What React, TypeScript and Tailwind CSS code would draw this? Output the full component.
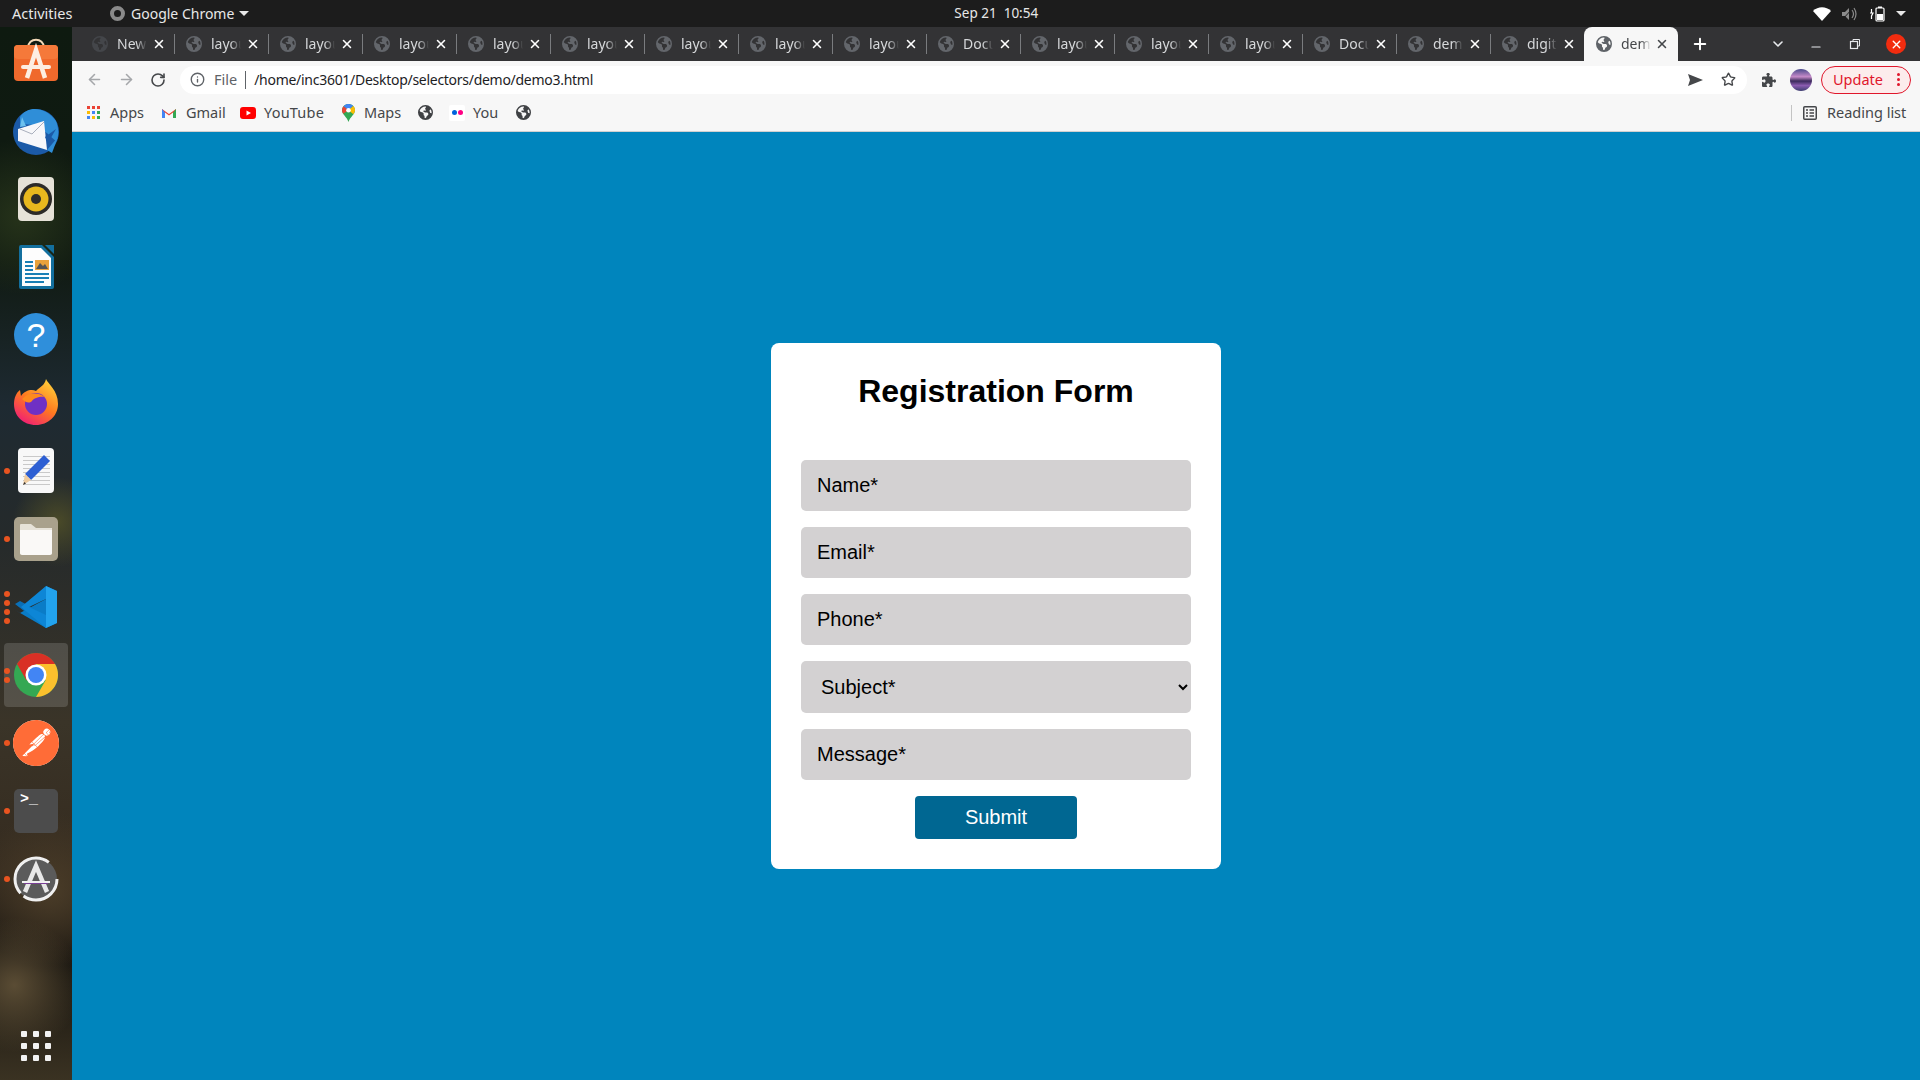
import React from 'react'
import { FaEarthAmericas, FaPuzzlePiece } from 'react-icons/fa6'
import { SiPostman } from 'react-icons/si'
import { ArrowLeft, ArrowRight, RotateCw, Info, Star, X, Plus, ChevronDown, Minus } from 'lucide-react'

const tabs = ['New', 'layout', 'layout', 'layout', 'layout', 'layout', 'layout', 'layout', 'layout', 'Document', 'layout', 'layout', 'layout', 'Document', 'demo', 'digital']

function Tab({ title, first, last }: { title: string; first?: boolean; last?: boolean }) {
  return (
    <div className="relative flex h-full w-[94px] shrink-0 items-center pb-[1px] pl-[12px]">
      <FaEarthAmericas className={`h-4 w-4 shrink-0 ${first ? 'text-[#44464a]' : 'text-[#63666b]'}`} />
      <span className="ml-[9px] w-[30px] overflow-hidden whitespace-nowrap text-[14px] text-[#d6d8da] [mask-image:linear-gradient(to_right,black_65%,transparent)]">{title}</span>
      <X className="ml-[5px] h-[14px] w-[14px] shrink-0 text-white" strokeWidth={2.6} />
      {!last && <div className="absolute right-[-1px] top-[7px] h-[20px] w-px bg-[#7a7c7f]" />}
    </div>
  )
}

function AppStore() {
  return (
    <svg className="-translate-y-[3px]" width="48" height="48" viewBox="0 0 48 48">
      <path d="M16 12 C16 1 32 1 32 12" fill="none" stroke="#f3d9b8" strokeWidth="2" />
      <rect x="2" y="9" width="44" height="36" rx="4" fill="#f0692c" />
      <rect x="2" y="9" width="44" height="14" rx="4" fill="#f5793a" />
      <path d="M15 42 L24 14 L33 42" fill="none" stroke="#fdeee2" strokeWidth="4.5" />
      <rect x="9" y="29" width="30" height="4" rx="2" fill="#fdeee2" />
    </svg>
  )
}

function Thunderbird() {
  return (
    <svg width="48" height="48" viewBox="0 0 48 48">
      <circle cx="24" cy="25" r="23" fill="#1b5aa8" />
      <path d="M8 10 C16 -2 34 0 44 14 C47 22 47 30 44 34 C36 28 26 14 8 18 Z" fill="#2f8ed8" />
      <path d="M6 22 L32 14 L35 43 L6 34 Z" fill="#f7f7fa" />
      <path d="M8 22 L20 27 L32 15" fill="none" stroke="#a9afbd" strokeWidth="1" />
      <path d="M35 43 L46 30 L40 46 Z" fill="#2f8ed8" />
      <path d="M33 30 L44 22 L36 36 Z" fill="#1b5aa8" />
      <path d="M10 10 L14 19 L8 20 Z" fill="#6cc0ee" />
    </svg>
  )
}

function Speaker() {
  return (
    <svg width="48" height="48" viewBox="0 0 48 48">
      <rect x="6" y="2" width="36" height="44" rx="4" fill="#e6e2d8" />
      <circle cx="24" cy="24" r="16" fill="#2c2a28" />
      <circle cx="24" cy="24" r="12.5" fill="#e8b81e" />
      <circle cx="24" cy="24" r="5" fill="#2f2d2a" />
    </svg>
  )
}

function Writer() {
  return (
    <svg width="48" height="48" viewBox="0 0 48 48">
      <path d="M7 4 Q7 2 9 2 H30 L42 14 V44 Q42 46 40 46 H9 Q7 46 7 44 Z" fill="#136f9e" />
      <path d="M10 5 H29 L39 15 V43 H10 Z" fill="#fdfdfd" />
      <path d="M33 2 H42 V11 Z" fill="#136f9e" />
      <rect x="13" y="18" width="8" height="2" fill="#1a7fb5" />
      <rect x="13" y="22" width="8" height="2" fill="#1a7fb5" />
      <rect x="13" y="26" width="8" height="2" fill="#1a7fb5" />
      <rect x="13" y="30" width="24" height="2" fill="#1a7fb5" />
      <rect x="13" y="34" width="24" height="2" fill="#1a7fb5" />
      <rect x="13" y="38" width="19" height="2" fill="#1a7fb5" />
      <rect x="23" y="17" width="14" height="10" fill="#e9a23b" />
      <path d="M24 26 L28 20 L31 23 L33 21 L36 26 Z" fill="#555" />
    </svg>
  )
}

function Firefox() {
  return (
    <svg className="-translate-y-[1px]" width="48" height="48" viewBox="0 0 48 48">
      <defs>
        <linearGradient id="ffBody" x1="0.8" y1="0" x2="0.2" y2="1">
          <stop offset="0" stopColor="#ffd23a" />
          <stop offset="0.5" stopColor="#ff7a1f" />
          <stop offset="1" stopColor="#f0187a" />
        </linearGradient>
      </defs>
      <path d="M34 1 C36 6 46 12 46 26 C46 38 36 47 24 47 C11 47 2 38 2 26 C2 20 4 15 8 12 L9 18 C13 12 20 11 24 13 C28 9 33 7 34 1 Z" fill="url(#ffBody)" />
      <circle cx="24" cy="26" r="11" fill="#6f30c4" />
      <path d="M10 21 C15 15 25 13 33 19 C28 18 22 20 20 23 C17 26 13 24 10 21 Z" fill="#ff8a1e" />
    </svg>
  )
}

function Editor() {
  return (
    <svg width="48" height="48" viewBox="0 0 48 48">
      <rect x="6" y="1" width="36" height="45" rx="4" fill="#f8f8f8" />
      {[9, 13, 17, 21, 25, 29, 33, 37].map(y => (
        <rect key={y} x="11" y={y} width="27" height="1" fill="#c9c9c9" />
      ))}
      <path d="M32 8 L38 14 L19 33 L13 27 Z" fill="#2d5fd3" />
      <path d="M13 27 L19 33 L11 38 Z" fill="#eecb9f" />
      <path d="M12.4 35 L11 38 L14 36.6 Z" fill="#333" />
    </svg>
  )
}

function Files() {
  return (
    <svg width="48" height="48" viewBox="0 0 48 48">
      <rect x="2" y="2" width="44" height="44" rx="5" fill="#a9a18c" />
      <path d="M8 10 Q8 9 9 9 H19 L24 13 H40 V38 Q40 39 39 39 H9 Q8 39 8 38 Z" fill="#e6e2d8" />
      <path d="M8 15 H40 V38 Q40 40 38 40 H10 Q8 40 8 38 Z" fill="#faf9f7" />
    </svg>
  )
}

function VSCode() {
  return (
    <svg width="48" height="48" viewBox="0 0 48 48">
      <path d="M34 3 L45 8 V40 L34 45 L3 21 L8 18 L34 32 Z" fill="#0a6fb7" />
      <path d="M34 45 L3 27 L8 30 L34 16 Z" fill="#0a7cc7" />
      <path d="M34 3 L45 8 V40 L34 45 Z" fill="#22a3ee" />
      <path d="M34 3 V16 L17 24 L34 32 V45 L9 24 Z" fill="#0d86d6" />
    </svg>
  )
}

function Chrome() {
  return (
    <svg width="48" height="48" viewBox="0 0 48 48">
      <circle cx="24" cy="24" r="22" fill="#34a853" />
      <path d="M43.05 13 A22 22 0 0 1 24 46 L33.5 29.5 L24 13 Z" fill="#fbc02d" />
      <path d="M5 13 A22 22 0 0 1 43.05 13 H24 L14.5 29.5 Z" fill="#d93025" />
      <circle cx="24" cy="24" r="10.5" fill="#ffffff" />
      <circle cx="24" cy="24" r="8" fill="#4285f4" />
    </svg>
  )
}

function Updater() {
  return (
    <svg width="48" height="48" viewBox="0 0 48 48">
      <circle cx="24" cy="24" r="21" fill="#5b5b5b" stroke="#f0f0f0" strokeWidth="3" strokeDasharray="46 4 62 20" />
      <path d="M13 37 L24 11 L35 37" fill="none" stroke="#e8e8e8" strokeWidth="4.5" />
      <rect x="10" y="26" width="28" height="2" fill="#f2f2f2" />
      <rect x="12" y="28" width="24" height="1" fill="#7a3f96" />
    </svg>
  )
}

const dockItems: { icon: React.ReactNode; dots: number; active?: boolean }[] = [
  { icon: <AppStore />, dots: 0 },
  { icon: <Thunderbird />, dots: 0 },
  { icon: <Speaker />, dots: 0 },
  { icon: <Writer />, dots: 0 },
  {
    icon: (
      <div className="flex h-[44px] w-[44px] items-center justify-center rounded-full bg-[#2f8fdb] font-['Liberation_Sans',sans-serif] text-[34px] leading-none text-white">?</div>
    ),
    dots: 0,
  },
  { icon: <Firefox />, dots: 0 },
  { icon: <Editor />, dots: 1 },
  { icon: <Files />, dots: 1 },
  { icon: <VSCode />, dots: 4 },
  { icon: <Chrome />, dots: 2, active: true },
  {
    icon: (
      <div className="flex h-[46px] w-[46px] items-center justify-center rounded-full bg-white">
        <SiPostman className="h-[46px] w-[46px] text-[#ff6c37]" />
      </div>
    ),
    dots: 1,
  },
  {
    icon: (
      <div className="h-[44px] w-[44px] rounded-[5px] bg-[#4c4c4c] pl-[6px] pt-[1px] font-['Liberation_Mono',monospace] text-[15px] font-bold leading-[20px] text-white">&gt;_</div>
    ),
    dots: 1,
  },
  { icon: <Updater />, dots: 1 },
]

function Dock() {
  return (
    <div className="flex w-[72px] shrink-0 flex-col bg-[radial-gradient(circle_at_20%_91%,#5a4c34_0,transparent_7%),radial-gradient(circle_at_70%_82%,#4a3c28_0,transparent_9%),radial-gradient(circle_at_80%_47%,#4a4a28_0,transparent_8%),radial-gradient(circle_at_30%_18%,#26331a_0,transparent_9%),linear-gradient(180deg,#0e1a10_0%,#101a12_22%,#1e2a32_36%,#252a2b_48%,#3a3428_66%,#352b1f_80%,#17140f_89%,#3a3222_100%)] pt-[2px]">
      {dockItems.map((item, i) => (
        <div key={i} className="relative flex h-[68px] items-center justify-center">
          {item.active && <div className="absolute left-[4px] top-[2px] h-[64px] w-[64px] rounded-[4px] bg-white/15" />}
          <div className="relative">{item.icon}</div>
          {item.dots > 0 && (
            <div className="absolute left-[4px] top-0 flex h-full flex-col justify-center gap-[3px]">
              {Array.from({ length: item.dots }).map((_, d) => (
                <div key={d} className="h-[6px] w-[6px] rounded-full bg-[#e95420]" />
              ))}
            </div>
          )}
        </div>
      ))}
      <div className="mt-auto mb-[19px] grid w-fit grid-cols-3 gap-[6px] self-center">
        {Array.from({ length: 9 }).map((_, i) => (
          <div key={i} className="h-[6px] w-[6px] rounded-[1px] bg-[#f2f2f2]" />
        ))}
      </div>
    </div>
  )
}

function TopBar() {
  return (
    <div className="flex h-[27px] shrink-0 items-center bg-[#1c1c1c] font-['Noto_Sans',sans-serif] text-[14px] text-[#e8e8e8]">
      <span className="ml-[12px] w-[98px] text-[14.5px]">Activities</span>
      <div className="h-[15px] w-[15px] rounded-full border-[4px] border-[#8a8a8a]" />
      <span className="ml-[6px]">Google Chrome</span>
      <div className="ml-[5px] h-0 w-0 border-x-[5px] border-t-[5px] border-x-transparent border-t-[#e8e8e8]" />
      <span className="ml-[705px] w-[90px] whitespace-pre text-[13.5px]">Sep 21  10:54</span>
      <div className="ml-auto flex items-center">
        <svg width="18" height="14" viewBox="0 0 18 14"><path d="M0 4 C5 -1 13 -1 18 4 L9 14 Z" fill="#ffffff" /></svg>
        <svg className="ml-[10px]" width="16" height="14" viewBox="0 0 16 14">
          <path d="M1 5 H4 L8 1 V13 L4 9 H1 Z" fill="#8b8b8b" />
          <path d="M11 3 Q14 7 11 11 M13 1 Q17 7 13 13" fill="none" stroke="#8b8b8b" strokeWidth="1.2" />
          <path d="M1 13 L12 1" stroke="#1c1c1c" strokeWidth="1" />
        </svg>
        <svg className="ml-[12px]" width="16" height="16" viewBox="0 0 16 16">
          <path d="M2.5 3 V7 M1 7 H4 L2.5 10 V13" fill="none" stroke="#fff" strokeWidth="1.2" />
          <rect x="7" y="2" width="8" height="13" rx="1" fill="none" stroke="#fff" strokeWidth="1.2" />
          <rect x="9" y="0.5" width="4" height="1.5" fill="#fff" />
          <rect x="8" y="8" width="6" height="6" fill="#fff" />
        </svg>
        <div className="ml-[11px] mr-[14px] h-0 w-0 border-x-[5px] border-t-[5px] border-x-transparent border-t-[#e8e8e8]" />
      </div>
    </div>
  )
}

function TabStrip() {
  return (
    <div className="flex h-[34px] shrink-0 items-end bg-[#333335] pl-[8px] font-['Noto_Sans',sans-serif]">
      {tabs.map((t, i) => (
        <Tab key={i} title={t} first={i === 0} last={i === tabs.length - 1} />
      ))}
      <div className="relative flex h-full w-[94px] shrink-0 items-center rounded-t-[8px] bg-[#f7f7f7] pb-[1px] pl-[12px]">
        <FaEarthAmericas className="h-4 w-4 shrink-0 text-[#5f6368]" />
        <span className="ml-[9px] w-[30px] overflow-hidden whitespace-nowrap text-[14px] text-[#45474a] [mask-image:linear-gradient(to_right,black_65%,transparent)]">demo</span>
        <X className="ml-[4px] h-[14px] w-[14px] shrink-0 text-[#45474a]" strokeWidth={2.6} />
      </div>
      <div className="flex h-full items-center">
        <Plus className="ml-[13px] h-[18px] w-[18px] text-white" strokeWidth={2.6} />
        <ChevronDown className="ml-[61px] h-[16px] w-[16px] text-[#e8eaed]" strokeWidth={2.4} />
        <Minus className="ml-[23px] h-[14px] w-[14px] translate-y-[3px] text-[#e8eaed]" />
        <svg className="ml-[26px]" width="12" height="12" viewBox="0 0 12 12">
          <rect x="1.5" y="3.5" width="7" height="7" fill="none" stroke="#e8eaed" strokeWidth="1.2" />
          <path d="M4 3 V1.5 H10.5 V8 H9" fill="none" stroke="#e8eaed" strokeWidth="1" />
        </svg>
        <div className="ml-[25px] flex h-[20px] w-[20px] items-center justify-center rounded-full bg-[#f22c0f]">
          <X className="h-[13px] w-[13px] text-white" strokeWidth={2.6} />
        </div>
      </div>
    </div>
  )
}

function Toolbar() {
  return (
    <div className="flex h-[38px] shrink-0 items-center bg-[#f7f7f7] pb-[3px] pt-[2px] font-['Noto_Sans',sans-serif]">
      <ArrowLeft className="ml-[14px] h-[17px] w-[17px] text-[#a5a7aa]" strokeWidth={2.2} />
      <ArrowRight className="ml-[15px] h-[17px] w-[17px] text-[#a5a7aa]" strokeWidth={2.2} />
      <RotateCw className="ml-[15px] h-[16px] w-[16px] text-[#45474a]" strokeWidth={2.4} />
      <div className="ml-[14px] flex h-[28px] w-[1567px] items-center rounded-full bg-white">
        <Info className="ml-[10px] h-[15px] w-[15px] text-[#5f6368]" strokeWidth={2.2} />
        <span className="ml-[9px] text-[14.5px] leading-none text-[#5f6368]">File</span>
        <div className="ml-[8px] h-[18px] w-px bg-[#5f6368]" />
        <span className="ml-[8px] text-[14px] leading-none tracking-[-0.28px] text-[#1d1d1f]">/home/inc3601/Desktop/selectors/demo/demo3.html</span>
        <svg className="ml-auto" width="15" height="14" viewBox="0 0 15 14"><path d="M0 1 L15 7 L0 13 L2 7 Z" fill="#45474a" /></svg>
        <Star className="ml-[18px] mr-[11px] h-[15px] w-[15px] text-[#45474a]" strokeWidth={2.2} />
      </div>
      <FaPuzzlePiece className="ml-[15px] h-[14px] w-[14px] text-[#45474a]" />
      <div className="ml-[14px] h-[22px] w-[22px] rounded-full bg-[linear-gradient(180deg,#4a4a8c_0%,#c58ac8_35%,#3b2b5c_55%,#8b5cb0_75%,#3d3d70_100%)]" />
      <div className="ml-[9px] flex h-[28px] w-[90px] items-center rounded-full border border-[#e0162b] bg-[#fcecec] pl-[11px] text-[14.5px] leading-none text-[#e0162b]">
        Update
        <div className="ml-auto mr-[10px] flex flex-col gap-[2px]">
          <div className="h-[3px] w-[3px] rounded-full bg-[#e0162b]" />
          <div className="h-[3px] w-[3px] rounded-full bg-[#e0162b]" />
          <div className="h-[3px] w-[3px] rounded-full bg-[#e0162b]" />
        </div>
      </div>
    </div>
  )
}

function Bookmarks() {
  return (
    <div className="flex h-[33px] shrink-0 items-center border-b border-[#d0d0d0] bg-[#f7f7f7] pb-[5px] font-['Noto_Sans',sans-serif] text-[14.5px] text-[#45474a]">
      <div className="ml-[15px] grid grid-cols-3 gap-[2px]">
        {['#ea4335', '#ea4335', '#ea4335', '#fbbc05', '#4285f4', '#34a853', '#4285f4', '#fbbc05', '#34a853'].map((c, i) => (
          <svg key={i} width="3" height="3" viewBox="0 0 3 3" className="block"><rect width="3" height="3" fill={c} /></svg>
        ))}
      </div>
      <span className="ml-[10px] w-[34px]">Apps</span>
      <svg className="ml-[18px]" width="14" height="12" viewBox="0 0 14 12">
        <path d="M0 2 L7 7 L14 2 V11 H11 V5.5 L7 8.5 L3 5.5 V11 H0 Z" fill="#ea4335" />
        <path d="M0 2 V11 H3 V5.5 Z" fill="#4285f4" />
        <path d="M14 2 V11 H11 V5.5 Z" fill="#34a853" />
      </svg>
      <span className="ml-[10px] w-[38px]">Gmail</span>
      <svg className="ml-[16px]" width="16" height="12" viewBox="0 0 16 12">
        <rect width="16" height="12" rx="3" fill="#f00" />
        <path d="M6.5 3.5 L11 6 L6.5 8.5 Z" fill="#fff" />
      </svg>
      <span className="ml-[8px] w-[60px] tracking-[0.2px]">YouTube</span>
      <svg className="ml-[18px]" width="13" height="18" viewBox="0 0 13 18">
        <path d="M6.5 0 C10 0 13 2.7 13 6.3 C13 10.5 8 13 6.5 18 C5 13 0 10.5 0 6.3 C0 2.7 3 0 6.5 0 Z" fill="#34a853" />
        <path d="M1.5 2.2 C3 .6 5 0 6.5 0 C8.5 0 10 .8 11.2 2 L6.5 6.3 Z" fill="#4285f4" />
        <path d="M0 6.3 C0 5 .6 3.4 1.5 2.2 L6.5 6.3 L1.2 9.8 C.4 8.7 0 7.6 0 6.3 Z" fill="#ea4335" />
        <path d="M11.2 2 C12.4 3 13 4.7 13 6.3 C13 7.8 12.2 9 11.4 10.2 L6.5 6.3 Z" fill="#fbbc05" />
        <circle cx="6.5" cy="6.3" r="2.3" fill="#fff" />
      </svg>
      <span className="ml-[9px] w-[36px]">Maps</span>
      <FaEarthAmericas className="ml-[18px] h-[15px] w-[15px] text-[#3f4144]" />
      <div className="ml-[16px] flex h-[16px] w-[16px] items-center justify-center gap-[1px] rounded-[2px] bg-white">
        <div className="h-[5px] w-[5px] rounded-full bg-[#0063dc]" />
        <div className="h-[5px] w-[5px] rounded-full bg-[#ff0084]" />
      </div>
      <span className="ml-[8px] w-[26px]">You</span>
      <FaEarthAmericas className="ml-[17px] h-[15px] w-[15px] text-[#3f4144]" />
      <div className="ml-auto h-[16px] w-px bg-[#c4c4c4]" />
      <svg className="ml-[11px]" width="14" height="14" viewBox="0 0 14 14">
        <rect x="0.75" y="0.75" width="12.5" height="12.5" rx="1" fill="none" stroke="#45474a" strokeWidth="1.5" />
        <path d="M3 4 H5 M6.5 4 H11 M3 7 H5 M6.5 7 H11 M3 10 H5 M6.5 10 H11" stroke="#45474a" strokeWidth="1.3" />
      </svg>
      <span className="ml-[10px] mr-[13px] w-[80px] whitespace-nowrap">Reading list</span>
    </div>
  )
}

function RegistrationForm() {
  const inputCls = "h-[51px] w-full rounded-[5px] bg-[#d3d1d2] px-4 text-[20px] text-black outline-none placeholder:text-black"
  return (
    <form className="flex w-[450px] flex-col gap-4 rounded-[8px] bg-white p-[30px] font-['Liberation_Sans',sans-serif]">
      <h1 className="mb-[34px] text-center text-[32px] font-bold leading-[37px] text-black">Registration Form</h1>
      <input className={inputCls} placeholder="Name*" />
      <input className={inputCls} placeholder="Email*" />
      <input className={inputCls} placeholder="Phone*" />
      <select className="h-[52px] w-full rounded-[5px] bg-[#d3d1d2] pl-4 text-[20px] text-black outline-none" defaultValue="">
        <option value="">Subject*</option>
      </select>
      <input className={inputCls} placeholder="Message*" />
      <button type="button" className="h-[43px] w-[162px] self-center rounded-[4px] bg-[#006792] pb-[2px] text-[20px] text-white">Submit</button>
    </form>
  )
}

export default function App() {
  return (
    <div className="flex h-screen w-screen flex-col overflow-hidden">
      <TopBar />
      <div className="flex min-h-0 flex-1">
        <Dock />
        <div className="flex min-w-0 flex-1 flex-col">
          <TabStrip />
          <Toolbar />
          <Bookmarks />
          <div className="flex flex-1 items-center justify-center bg-[#0085bd]">
            <RegistrationForm />
          </div>
        </div>
      </div>
    </div>
  )
}
